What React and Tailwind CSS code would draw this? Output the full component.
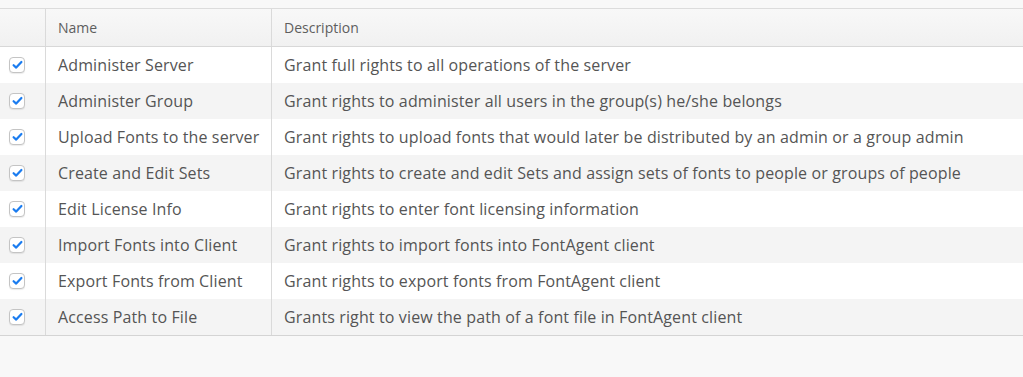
import React from 'react';

const rights = [
  { name: 'Administer Server', desc: 'Grant full rights to all operations of the server' },
  { name: 'Administer Group', desc: 'Grant rights to administer all users in the group(s) he/she belongs' },
  { name: 'Upload Fonts to the server', desc: 'Grant rights to upload fonts that would later be distributed by an admin or a group admin' },
  { name: 'Create and Edit Sets', desc: 'Grant rights to create and edit Sets and assign sets of fonts to people or groups of people' },
  { name: 'Edit License Info', desc: 'Grant rights to enter font licensing information' },
  { name: 'Import Fonts into Client', desc: 'Grant rights to import fonts into FontAgent client' },
  { name: 'Export Fonts from Client', desc: 'Grant rights to export fonts from FontAgent client' },
  { name: 'Access Path to File', desc: 'Grants right to view the path of a font file in FontAgent client' },
];

// Small checked box, mac-style
const CheckBox = () => (
  <div className="w-[16px] h-[16px] rounded-[4px] border border-[#c4c4c4] bg-white shadow-[0_1px_1px_rgba(0,0,0,0.08)] flex items-center justify-center">
    <svg width="11" height="10" viewBox="0 0 11 10">
      <path d="M1.6 5.2 L4.2 7.6 L9.4 2" fill="none" stroke="#1a7cf0" strokeWidth="2.2" strokeLinecap="round" strokeLinejoin="round" />
    </svg>
  </div>
);

export default function App() {
  return (
    <div className="w-[1023px] h-[377px] bg-[#f8f8f8] pt-[8px] font-['Open_Sans',sans-serif] text-[#555555]">
      <div className="border-t border-[#dcdcdc]">
        <div className="flex h-[38px] bg-gradient-to-b from-[#f8f8f8] to-[#f1f1f1] border-b border-[#d8d8d8] text-[14px] text-[#5e5e5e]">
          <div className="w-[46px] border-r border-[#dadada]" />
          <div className="w-[226px] border-r border-[#dadada] flex items-center pl-[12px]">Name</div>
          <div className="flex-1 flex items-center pl-[12px]">Description</div>
        </div>
        {rights.map((r, i) => (
          <div
            key={r.name}
            className={`flex h-[36px] text-[16px] tracking-[0.13px] ${i % 2 === 0 ? 'bg-white' : 'bg-[#f4f4f4]'}`}
          >
            <div className="w-[46px] border-r border-[#dadada] flex items-center pl-[9px]">
              <CheckBox />
            </div>
            <div className="w-[226px] border-r border-[#dadada] flex items-center pl-[12px] whitespace-nowrap">{r.name}</div>
            <div className="flex-1 flex items-center pl-[12px] whitespace-nowrap">{r.desc}</div>
          </div>
        ))}
        <div className="border-t border-[#d4d4d4]" />
      </div>
    </div>
  );
}
